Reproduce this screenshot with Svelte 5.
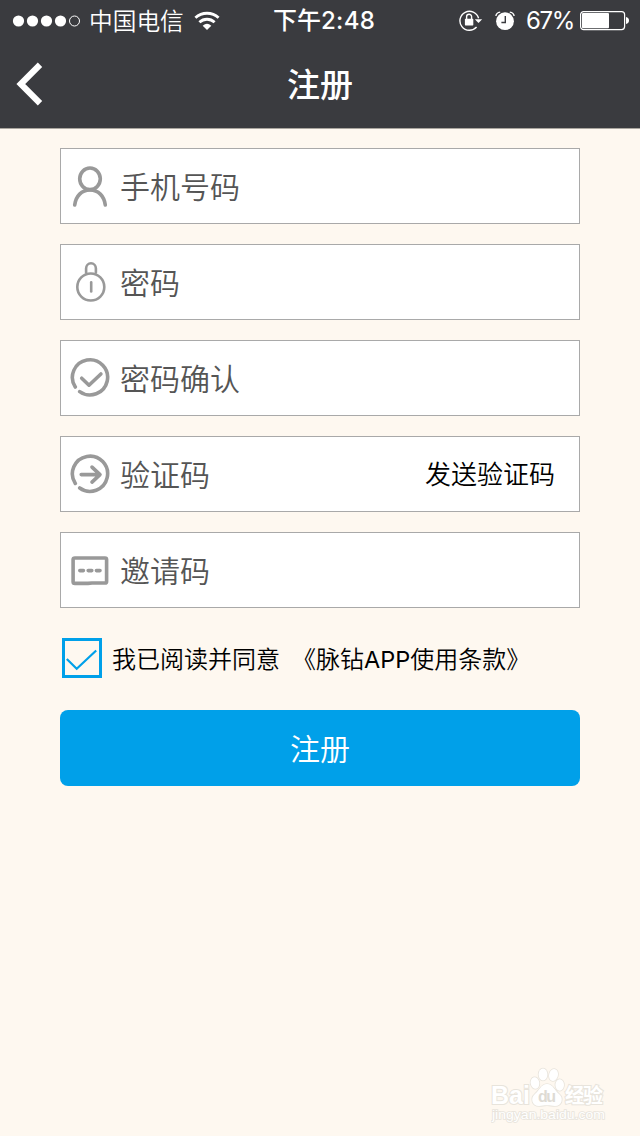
<script lang="ts">
    interface Field {
        icon: 'user' | 'lock' | 'check' | 'arrow' | 'card';
        label: string;
        action?: string;
    }

    const fields: Field[] = [
        { icon: 'user', label: '手机号码' },
        { icon: 'lock', label: '密码' },
        { icon: 'check', label: '密码确认' },
        { icon: 'arrow', label: '验证码', action: '发送验证码' },
        { icon: 'card', label: '邀请码' }
    ];

    const signal = 4;
    let agreed = $state(true);
</script>

<div class="screen">
    <header>
        <div class="status-bar">
            <div class="status-left">
                <svg class="signal" width="68" height="14" viewBox="0 0 68 14">
                    {#each Array(5) as _, i}
                        {#if i < signal}
                            <circle cx={6.5 + i * 14} cy="7" r="5.6" fill="#fff" />
                        {:else}
                            <circle cx={6.5 + i * 14} cy="7" r="5" fill="none" stroke="#fff" />
                        {/if}
                    {/each}
                </svg>
                <span class="carrier">中国电信</span>
                <svg class="wifi" width="26" height="20" viewBox="0 0 26 20">
                    <g fill="none" stroke="#fff" stroke-width="2.8">
                        <path d="M1.4 6.8 C8 .7 18 .7 24.6 6.8" />
                        <path d="M5.4 11.3 C9.8 7.2 16.2 7.2 20.6 11.3" />
                    </g>
                    <path d="M8.7 14.7 Q13 11 17.3 14.7 L13 19.1Z" fill="#fff" />
                </svg>
            </div>
            <div class="time">下午<span>2:48</span></div>
            <div class="status-right">
                <svg width="24" height="22" viewBox="0 0 24 22">
                    <path d="M17.6 17 A9.5 9.5 0 1 1 19.6 8.2" fill="none" stroke="#fff" stroke-width="1.4" />
                    <path d="M15.8 9.2h7.4l-3.7 3.9z" fill="#fff" />
                    <path d="M7.6 9.6V6.8a2.5 2.5 0 0 1 5 0V9.6" fill="none" stroke="#fff" stroke-width="1.4" />
                    <rect x="5.9" y="8.8" width="8.4" height="6.6" rx=".6" fill="#fff" />
                </svg>
                <svg class="alarm" width="20" height="20" viewBox="0 0 20 20">
                    <circle cx="10" cy="10.2" r="8.9" fill="#fff" />
                    <path d="M.9 5Q1.3 1.6 5.2 1.1M14.8 1.1Q18.7 1.6 19.1 5" fill="none" stroke="#fff" stroke-width="1.4" />
                    <path d="M10.3 5v6.5H6.4" fill="none" stroke="#3a3b3f" stroke-width="1.4" />
                </svg>
                <span class="percent">67%</span>
                <svg width="50" height="20" viewBox="0 0 50 20">
                    <rect x=".6" y=".6" width="44" height="18" rx="3" fill="none" stroke="#fff" stroke-width="1.2" />
                    <rect x="2" y="2" width="27" height="15.2" rx="1" fill="#fff" />
                    <path d="M46 6.1q3 .7 3 3.5t-3 3.5z" fill="#fff" />
                </svg>
            </div>
        </div>
        <div class="nav-bar">
            <button class="back" aria-label="返回">
                <svg width="28" height="44" viewBox="0 0 28 44">
                    <path d="M24 2.8 4.8 22 24 41.2" fill="none" stroke="#fff" stroke-width="6.2" />
                </svg>
            </button>
            <h1>注册</h1>
        </div>
    </header>

    <main>
        {#each fields as field}
            <div class="field">
                <svg class="field-icon" width="40" height="44" viewBox="0 0 40 44">
                    {#if field.icon === 'user'}
                        <ellipse cx="20" cy="14.8" rx="10.3" ry="10.8" />
                        <path d="M4.7 41C5.9 32 11.6 26 20 26s14.1 6 15.3 15" />
                    {:else if field.icon === 'lock'}
                        <g class="thin">
                            <circle cx="20.8" cy="27" r="13.5" />
                            <path d="M16.1 12.5V8.6a4.9 5.3 0 0 1 9.8 0v3.9" />
                            <path d="M21.2 22.4v9" />
                        </g>
                    {:else if field.icon === 'check'}
                        <path d="M5.3 31A17.6 17.6 0 1 1 9.7 35.6" />
                        <path d="M11.7 22.2l7.3 7L30.9 18" />
                    {:else if field.icon === 'arrow'}
                        <path d="M5.3 31.4A17.6 17.6 0 1 1 9.7 36" />
                        <path d="M11.2 22.6h18.2M22 15.1l8 7.5-8 7.5" />
                    {:else}
                        <path d="M5 10h30q1.6 0 1.6 1.6V33.4q0 1.6-1.6 1.6H22L18 35.4H5q-1.9 0-1.9-1.7V11.6q0-1.6 1.9-1.6z" />
                        <path d="M9.8 22.6h3.6M18.2 22.6h3.6M26.4 22.6h3.6" />
                    {/if}
                </svg>
                <span class="label">{field.label}</span>
                {#if field.action}
                    <button class="action">{field.action}</button>
                {/if}
            </div>
        {/each}

        <div class="agreement">
            <button class="checkbox" aria-label="同意" onclick={() => (agreed = !agreed)}>
                {#if agreed}
                    <svg width="34" height="34" viewBox="0 0 34 34">
                        <path d="M1.8 18 L11.7 27.7 31.2 9.5" fill="none" stroke="#00a0e9" stroke-width="2.2" />
                    </svg>
                {/if}
            </button>
            <span class="agree-text">我已阅读并同意</span>
            <span class="terms">《脉钻<span class="latin">APP</span>使用条款》</span>
        </div>

        <button class="submit">注册</button>
    </main>

    <svg class="watermark" width="120" height="62" viewBox="0 0 120 62">
        <g fill="#fff" stroke="#e8e4dc" stroke-width="1.6" paint-order="stroke">
            <ellipse cx="44" cy="21" rx="4.3" ry="5.8" transform="rotate(-10 44 21)" />
            <ellipse cx="52" cy="12.5" rx="4.4" ry="6" />
            <ellipse cx="62.5" cy="13" rx="4.4" ry="6" transform="rotate(15 62.5 13)" />
            <ellipse cx="68.7" cy="23" rx="4.3" ry="5.8" />
            <path d="M56 22c-6 0-8 7-12 10-5 4-3 12 4 12 3 0 5-.7 8-.7s5 .7 8 .7c7 0 9-8 4-12-4-3-6-10-12-10z" />
            <g stroke-width="2">
                <text x="0" y="42" font-size="25" font-weight="700" textLength="39">Bai</text>
                <text x="74" y="41" font-size="20" font-weight="700" textLength="38">经验</text>
            </g>
            <text x="1" y="57" font-size="13" textLength="113" lengthAdjust="spacingAndGlyphs">jingyan.baidu.com</text>
        </g>
        <text x="47" y="40" font-size="16" font-weight="700" fill="#dedbd4" textLength="18">du</text>
    </svg>
</div>

<style>
    :global(body) {
        background: #fef8f0;
    }

    .screen {
        position: relative;
        box-sizing: border-box;
        width: 640px;
        height: 1136px;
        overflow: hidden;
        background: #fef8f0;
        font-family: Roboto, "Noto Sans CJK SC", sans-serif;
    }

    button {
        padding: 0;
        border: none;
        background: none;
        font: inherit;
    }

    svg {
        display: block;
        flex-shrink: 0;
    }

    header {
        box-sizing: border-box;
        height: 129px;
        background: #3a3b3f;
        border-bottom: 1px solid #aaa69f;
        color: #fff;
    }

    .status-bar {
        display: grid;
        grid-template-columns: 273px 1fr 181px;
        align-items: center;
        height: 41px;
        white-space: nowrap;
    }

    .status-left,
    .status-right {
        display: flex;
        align-items: center;
    }

    .signal {
        margin-left: 12px;
    }

    .carrier {
        width: 96px;
        margin-left: 9px;
        padding-top: 2px;
        font-size: 23.7px;
        font-weight: 350;
        line-height: 38px;
    }

    .wifi {
        margin-left: 9px;
    }

    .time {
        padding-top: 1px;
        font-size: 24px;
        font-weight: 500;
        line-height: 38px;
    }

    .time span {
        font-family: Inter, sans-serif;
        font-size: 24px;
        letter-spacing: 0.3px;
    }

    .alarm {
        margin-left: 12px;
    }

    .percent {
        width: 54px;
        margin-left: 11px;
        padding-top: 1px;
        font-family: Inter, sans-serif;
        font-size: 24px;
        line-height: 38px;
        letter-spacing: -1.3px;
    }

    .nav-bar {
        display: grid;
        grid-template-columns: 80px 1fr 80px;
        align-items: center;
        height: 85px;
    }

    .back {
        width: 28px;
        margin-left: 16px;
    }

    h1 {
        margin: 0;
        padding-top: 4px;
        font-size: 33px;
        font-weight: 500;
        line-height: 48px;
        text-align: center;
    }

    main {
        display: flex;
        flex-direction: column;
        gap: 20px;
        padding: 19px 60px 0;
    }

    .field {
        display: flex;
        align-items: center;
        box-sizing: border-box;
        height: 76px;
        padding: 0 24px 0 9px;
        background: #fff;
        border: 1px solid #a9a9a9;
    }

    .field-icon {
        fill: none;
        stroke: #999;
        stroke-width: 3.6;
        stroke-linecap: round;
        stroke-linejoin: round;
    }

    .thin {
        stroke-width: 2.6;
    }

    .label {
        margin-left: 10px;
        padding-top: 3px;
        color: #555;
        font-size: 30px;
        font-weight: 350;
        line-height: 44px;
    }

    .action {
        margin-left: auto;
        padding-bottom: 3px;
        color: #000;
        font-size: 26px;
        font-weight: 350;
    }

    .agreement {
        display: flex;
        align-items: center;
        height: 40px;
        margin: 10px 0 12px 2px;
        color: #000;
        font-size: 24px;
        font-weight: 350;
        white-space: nowrap;
    }

    .checkbox {
        box-sizing: border-box;
        width: 40px;
        height: 40px;
        border: 3px solid #00a0e9;
    }

    .agree-text {
        margin-left: 10px;
        padding-bottom: 2px;
    }

    .terms {
        margin-left: 12px;
        padding-bottom: 2px;
    }

    .latin {
        font-family: Inter, sans-serif;
        font-size: 23.5px;
        font-weight: 400;
    }

    .submit {
        height: 76px;
        padding-bottom: 2px;
        border-radius: 8px;
        background: #00a0e9;
        color: #fff;
        font-size: 30px;
        font-weight: 350;
    }

    .watermark {
        position: absolute;
        right: 29px;
        bottom: 12px;
        font-family: "Liberation Sans", "Noto Sans CJK SC", sans-serif;
    }
</style>
